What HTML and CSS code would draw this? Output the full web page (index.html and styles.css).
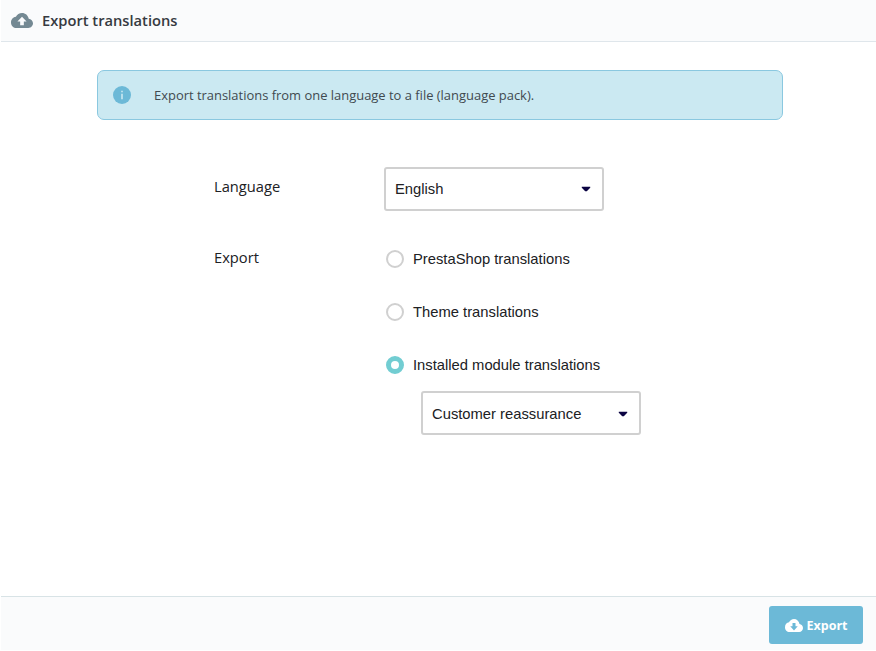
FILE: index.html
```html
<!DOCTYPE html>
<html lang="en">
<head>
<meta charset="utf-8">
<title>Export translations</title>
<link rel="stylesheet" href="styles.css">
</head>
<body>
<form class="card">
  <header class="card-header">
    <svg class="header-icon" viewBox="0 4 24 16" preserveAspectRatio="none"><path fill="currentColor" d="M19.35 10.04C18.67 6.59 15.64 4 12 4 9.11 4 6.6 5.64 5.35 8.04 2.34 8.36 0 10.91 0 14c0 3.31 2.69 6 6 6h13c2.76 0 5-2.24 5-5 0-2.64-2.05-4.78-4.65-4.96zM14 13v4h-4v-4H7l5-5 5 5h-3z"/></svg>
    <h1 class="title">Export translations</h1>
  </header>
  <main class="card-body">
    <div class="alert">
      <svg class="info-icon" viewBox="0 0 18 18"><circle cx="9" cy="9" r="9" fill="#6cb9d7"/><path fill="#cbe9f2" d="M8.2 4.700h1.600v1.600H8.200zM8.200 7.700h1.600v5.600H8.200z"/></svg>
      <p class="alert-text">Export translations from one language to a file (language pack).</p>
    </div>
    <div class="row language-row">
      <div class="label">Language</div>
      <div class="select"><span>English</span><svg class="caret" viewBox="0 0 10 6"><path d="M.8.7h8.400v1L5.800 5.300H4.200L.8 1.700z"/></svg></div>
    </div>
    <div class="row">
      <div class="label export-label">Export</div>
      <div class="options">
        <label class="option"><span class="radio"></span>PrestaShop translations</label>
        <label class="option"><span class="radio"></span>Theme translations</label>
        <label class="option"><span class="radio checked"></span>Installed module translations</label>
        <div class="select nested"><span>Customer reassurance</span><svg class="caret" viewBox="0 0 10 6"><path d="M.8.7h8.400v1L5.800 5.300H4.200L.8 1.700z"/></svg></div>
      </div>
    </div>
  </main>
  <footer class="card-footer">
    <button class="button" type="button">
      <svg class="button-icon" viewBox="0 4 24 16" preserveAspectRatio="none"><path fill="currentColor" d="M19.35 10.04C18.67 6.59 15.64 4 12 4 9.11 4 6.6 5.64 5.35 8.04 2.34 8.36 0 10.91 0 14c0 3.31 2.69 6 6 6h13c2.76 0 5-2.24 5-5 0-2.64-2.05-4.78-4.65-4.96zM17 13l-5 5-5-5h3V9h4v4h3z"/></svg>
      <span>Export</span>
    </button>
  </footer>
</form>
</body>
</html>
```

FILE: styles.css
```css
* { box-sizing: border-box; }

body {
  margin: 0;
  background: #fff;
  color: #202124;
  font-family: "Open Sans", sans-serif;
}

.card {
  display: flex;
  flex-direction: column;
  height: 650px;
  margin-left: 1px;
}

.card-header {
  display: flex;
  align-items: center;
  gap: 9px;
  height: 42px;
  padding-left: 10px;
  background: #fafbfc;
  border-bottom: 1px solid #dfe6eb;
}

.header-icon {
  width: 22px;
  height: 15px;
  color: #748993;
}

.title {
  margin: 0;
  padding-bottom: 2px;
  font-size: 14.700px;
  font-weight: 600;
  line-height: 20px;
  color: #363a41;
}

.card-body {
  flex: 1;
  padding-top: 28px;
}

.alert {
  display: flex;
  align-items: center;
  width: 686px;
  height: 50px;
  margin-left: 96px;
  padding-left: 15px;
  background: #cbe9f2;
  border: 1px solid #8ac8e0;
  border-radius: 7px;
}

.info-icon {
  width: 18px;
  height: 18px;
}

.alert-text {
  margin: 0 0 0 23px;
  font-size: 12.950px;
  color: #414a50;
}

.row {
  display: grid;
  grid-template-columns: 170px 1fr;
  margin-left: 213px;
}

.language-row {
  margin: 47px 0 36px 213px;
}

.label {
  padding-top: 9px;
  font-size: 14.700px;
  line-height: 20px;
}

.export-label {
  padding-top: 0;
}

.select {
  display: flex;
  align-items: center;
  justify-content: space-between;
  width: 220px;
  height: 44px;
  padding: 0 11px 0 9px;
  border: 2px solid #d0d0d0;
  border-radius: 3px;
  font: 14.780px "Liberation Sans", sans-serif;
}

.caret {
  width: 10px;
  height: 6px;
  fill: #0b0442;
}

.options {
  padding-top: 2px;
}

.option {
  display: flex;
  align-items: center;
  gap: 9px;
  height: 20px;
  margin: 0 0 33px 2px;
  font: 14.780px "Liberation Sans", sans-serif;
}

.radio {
  width: 18px;
  height: 18px;
  border: 2px solid #d0d0d0;
  border-radius: 50%;
}

.radio.checked {
  border: 5px solid #72cdd2;
}

.nested {
  margin: -17px 0 0 37px;
  padding-top: 1px;
}

.card-footer {
  display: flex;
  justify-content: flex-end;
  height: 54px;
  padding: 9px 13px 0 0;
  background: #fafbfc;
  border-top: 1px solid #d8e3e6;
}

.button {
  display: flex;
  align-items: center;
  justify-content: center;
  gap: 4px;
  width: 94px;
  height: 38px;
  padding: 0;
  border: 0;
  border-radius: 3px;
  background: #6cb9d7;
  color: #fff;
  font: 700 12.500px "Open Sans", sans-serif;
}

.button-icon {
  width: 18px;
  height: 13px;
}
```
